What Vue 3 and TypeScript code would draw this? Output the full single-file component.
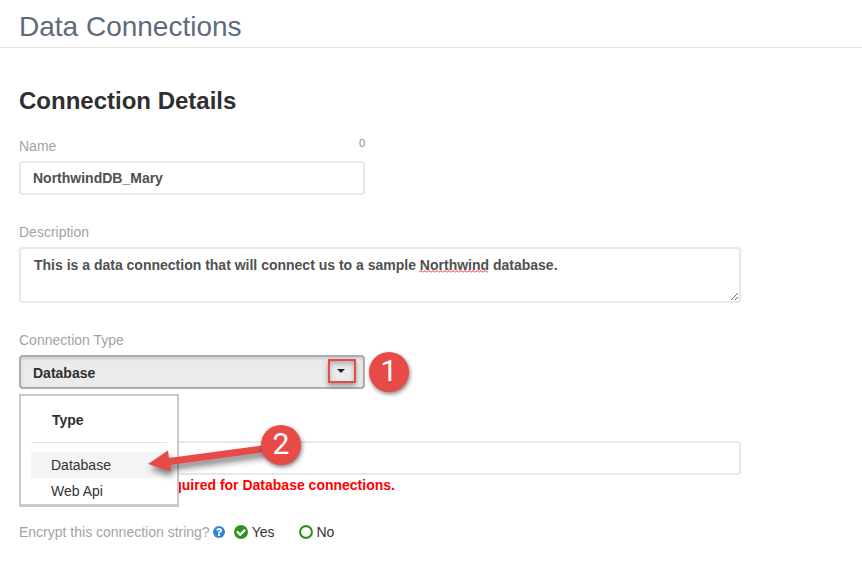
<script setup lang="ts">
import { ref } from 'vue'

const connectionTypes: string[] = ['Database', 'Web Api']

const name = ref('NorthwindDB_Mary')
const description = ref('This is a data connection that will connect us to a sample Northwind database.')
const connectionType = ref('Database')
const connectionString = ref('')
const encrypt = ref('yes')
</script>

<template>
  <div class="page">
    <header class="page-header">
      <h1>Data Connections</h1>
    </header>

    <main class="content">
      <h2>Connection Details</h2>

      <form class="form" @submit.prevent>
        <div class="field short">
          <div class="label-row">
            <label for="name">Name</label>
            <span class="counter">0</span>
          </div>
          <input id="name" v-model="name" class="control" type="text" spellcheck="false" />
        </div>

        <div class="field">
          <label for="description">Description</label>
          <div class="textarea-wrap">
            <textarea id="description" v-model="description" class="control" rows="2" spellcheck="false"></textarea>
            <svg class="squiggle" width="69" height="3" aria-hidden="true">
              <defs>
                <pattern id="wave" width="4" height="3" patternUnits="userSpaceOnUse">
                  <path d="M0 2.500L2 .5L4 2.500" fill="none" stroke="#f0202a" stroke-width="1" />
                </pattern>
              </defs>
              <rect width="69" height="3" fill="url(#wave)" />
            </svg>
          </div>
        </div>

        <div class="field short">
          <label for="type">Connection Type</label>
          <div class="combo">
            <select id="type" v-model="connectionType" class="control">
              <option v-for="t in connectionTypes" :key="t" :value="t">{{ t }}</option>
            </select>
            <svg class="caret" width="8" height="4" viewBox="0 0 8 4" aria-hidden="true">
              <path d="M0 0h8L4 4z" fill="#222" />
            </svg>
            <span class="highlight"></span>
            <span class="badge badge-one">1</span>

            <div class="menu">
              <div class="menu-title">Type</div>
              <button
                v-for="t in connectionTypes"
                :key="t"
                type="button"
                class="menu-item"
                :class="{ active: t === connectionType }"
                @click="connectionType = t"
              >
                {{ t }}
              </button>
            </div>

            <svg class="arrow" width="124" height="34" viewBox="0 0 124 34" aria-hidden="true">
              <path d="M0 16L20 2.500L21 10L118 -3V4L22 17L23 23.500Z" fill="#e84a48" />
            </svg>
            <span class="badge badge-two">2</span>
          </div>
        </div>

        <div class="field connection-string">
          <input
            v-model="connectionString"
            class="control"
            type="text"
            aria-label="Connection String"
            aria-describedby="string-error"
          />
          <p id="string-error" class="error">required for Database connections.</p>
        </div>

        <div class="encrypt" role="radiogroup" aria-labelledby="encrypt-label">
          <span id="encrypt-label" class="muted">Encrypt this connection string?</span>
          <svg class="help" width="12" height="12" viewBox="128 128 1536 1536" aria-hidden="true">
            <circle cx="896" cy="896" r="768" fill="#2f86d6" />
            <path
              fill="#fff"
              d="M1024 1376v-192q0-14-9-23t-23-9h-192q-14 0-23 9t-9 23v192q0 14 9 23t23 9h192q14 0 23-9t9-23zm256-672q0-88-55.500-163t-138.500-116-170-41q-243 0-371 213-15 24 8 42l132 100q7 6 19 6 16 0 25-12 53-68 86-92 34-24 86-24 48 0 85.500 26t37.500 59q0 38-20 61t-68 45q-63 28-115.500 86.500t-52.500 125.500v36q0 14 9 23t23 9h192q14 0 23-9t9-23q0-19 21.500-49.500t54.500-49.500q32-18 49-28.500t46-35 44.500-48 28-60.500 12.500-81z"
            />
          </svg>
          <label v-for="o in ['Yes', 'No']" :key="o" class="choice">
            <input v-model="encrypt" type="radio" name="encrypt" :value="o.toLowerCase()" />
            <svg v-if="encrypt === o.toLowerCase()" width="14" height="14" viewBox="128 128 1536 1536" aria-hidden="true">
              <circle cx="896" cy="896" r="768" fill="#2e9420" />
              <path
                fill="#fff"
                d="M1412 734q0-28-18-46l-91-90q-19-19-45-19t-45 19l-408 407-226-226q-19-19-45-19t-45 19l-91 90q-18 18-18 46 0 27 18 45l362 362q19 19 45 19 27 0 46-19l543-543q18-18 18-45z"
              />
            </svg>
            <svg v-else width="14" height="14" viewBox="0 0 14 14" aria-hidden="true">
              <circle cx="7" cy="7" r="5.900" fill="none" stroke="#2e9420" stroke-width="2.100" />
            </svg>
            {{ o }}
          </label>
        </div>
      </form>
    </main>
  </div>
</template>

<style>
body {
  background: #fff;
}
</style>

<style scoped>
.page {
  font-family: "Liberation Sans", Arial, sans-serif;
  font-size: 14px;
  line-height: 20px;
  color: #333;
}

.page *,
.page *::before {
  box-sizing: border-box;
}

.page-header {
  padding: 11px 19px 4px;
  border-bottom: 1px solid #e2e2e2;
}

h1 {
  margin: 0;
  font-size: 28px;
  line-height: 32px;
  font-weight: 400;
  color: #5f6b7c;
}

h2 {
  margin: 0 0 21px;
  font-size: 24px;
  line-height: 28px;
  font-weight: 700;
  color: #2f2f2f;
}

.content {
  padding: 39px 19px 20px;
}

.form {
  display: flex;
  flex-direction: column;
  gap: 27px;
  max-width: 722px;
}

.field {
  display: flex;
  flex-direction: column;
  gap: 5px;
}

.short {
  width: 100%;
  max-width: 346px;
}

label,
.muted {
  color: #a3a3a3;
}

.label-row {
  display: flex;
  justify-content: space-between;
}

.counter {
  font-size: 11px;
  line-height: 14px;
  color: #888;
}

.control {
  display: block;
  width: 100%;
  height: 34px;
  margin: 0;
  padding: 0 12px;
  border: 2px solid #e2e8ed;
  border-radius: 4px;
  background: #fff;
  font: inherit;
  font-weight: 700;
  color: #505050;
  outline: none;
}

.textarea-wrap,
.combo {
  position: relative;
}

textarea.control {
  height: 56px;
  padding: 6px 13px;
  resize: vertical;
}

.squiggle {
  position: absolute;
  left: 400px;
  top: 23px;
}

select.control {
  appearance: none;
  padding-top: 2px;
  border-color: #adadad;
  background: #ebebeb;
  box-shadow: inset 0 2px 3px rgba(0, 0, 0, 0.12);
  color: #2f2f2f;
}

.caret {
  position: absolute;
  right: 20px;
  top: 14px;
  pointer-events: none;
}

.highlight {
  position: absolute;
  right: 9px;
  top: 4px;
  width: 28px;
  height: 24px;
  border: 2px solid #e84a48;
  box-shadow: 0 3px 5px rgba(0, 0, 0, 0.35), inset 0 3px 5px rgba(0, 0, 0, 0.25);
  pointer-events: none;
}

.badge {
  position: absolute;
  width: 40px;
  height: 40px;
  border-radius: 50%;
  background: #e84a48;
  box-shadow: 1px 2px 4px rgba(0, 0, 0, 0.5);
  color: #fff;
  font-family: Roboto, "Open Sans", sans-serif;
  font-size: 30px;
  line-height: 38px;
  text-align: center;
}

.badge-one {
  left: 350px;
  top: -3px;
}

.badge-two {
  left: 242px;
  top: 70px;
}

.arrow {
  position: absolute;
  left: 129px;
  top: 93px;
  overflow: visible;
  filter: drop-shadow(2px 5px 3px rgba(0, 0, 0, 0.5));
  pointer-events: none;
}

.menu {
  position: absolute;
  left: 0;
  top: 39px;
  width: 160px;
  padding: 0 10px;
  border: 2px solid #c9c9c9;
  border-bottom-width: 3px;
  background: #fff;
}

.menu-title {
  margin-bottom: 9px;
  padding: 14px 21px 12px;
  border-bottom: 1px solid #e2e2e2;
  font-weight: 700;
  color: #2f2f2f;
}

.menu-item {
  display: block;
  width: 100%;
  height: 26px;
  padding: 0 20px;
  border: 0;
  background: none;
  font: inherit;
  text-align: left;
  color: #333;
}

.menu-item.active {
  background: #f4f4f4;
}

.connection-string {
  padding-top: 25px;
}

.error {
  margin: -5px 0 0 141px;
  font-weight: 700;
  color: #f00;
}

.encrypt {
  display: flex;
  align-items: center;
}

.help {
  margin: 0 9px 0 3px;
}

.choice {
  position: relative;
  display: flex;
  align-items: center;
  gap: 4px;
  margin-right: 24px;
  color: #333;
}

.choice input {
  position: absolute;
  left: 0;
  width: 14px;
  height: 14px;
  margin: 0;
  opacity: 0;
}
</style>
